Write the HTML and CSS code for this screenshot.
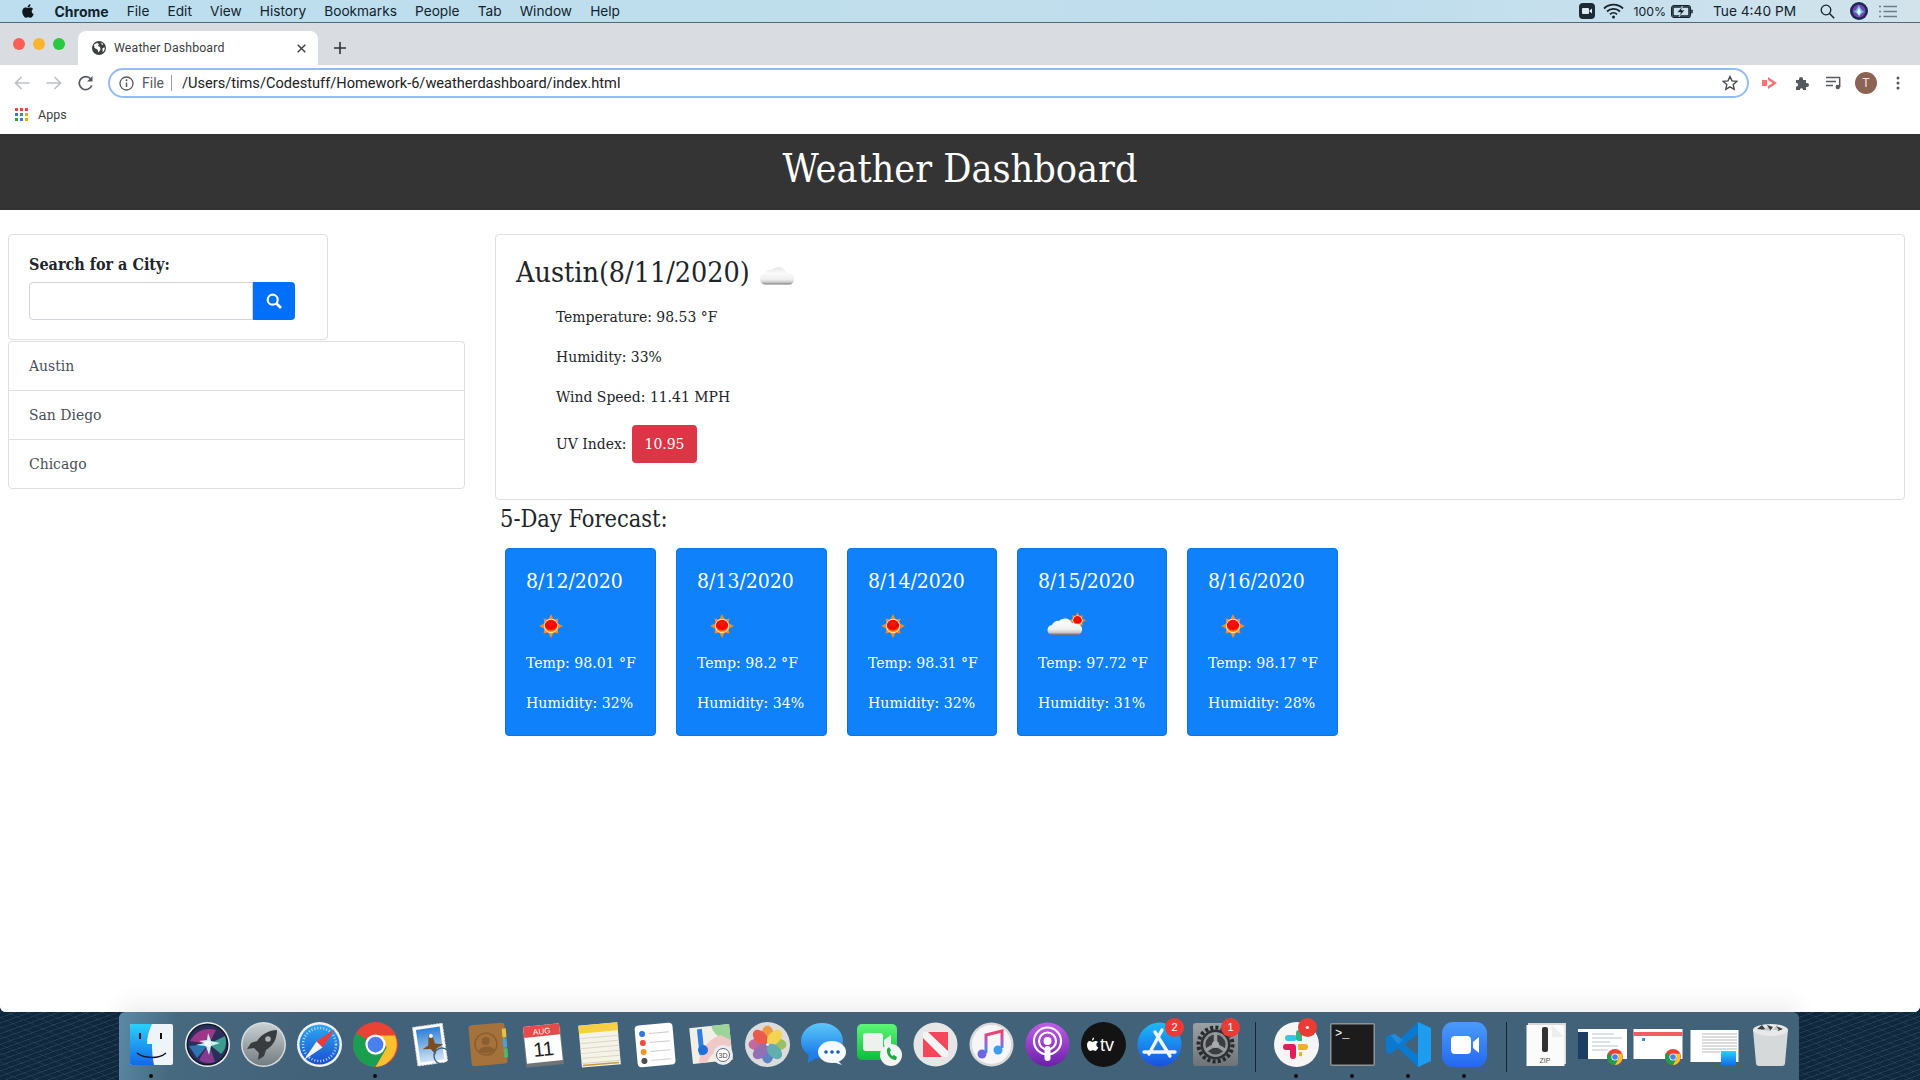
FILE: index.html
```html
<!DOCTYPE html>
<html lang="en">
<head>
<meta charset="utf-8">
<title>Weather Dashboard</title>
<link rel="stylesheet" href="styles.css">
</head>
<body>
<svg class="defs" width="0" height="0">
  <defs>
    <radialGradient id="sunG" cx="50%" cy="30%" r="70%"><stop offset="0" stop-color="#ff1a00"/><stop offset=".65" stop-color="#f50000"/><stop offset="1" stop-color="#ffc000"/></radialGradient>
    <linearGradient id="cloudG" x1="0" y1="0" x2="0" y2="1"><stop offset="0" stop-color="#fff"/><stop offset=".65" stop-color="#f0f0f0"/><stop offset=".85" stop-color="#c8c8c8"/><stop offset="1" stop-color="#666"/></linearGradient>
    <linearGradient id="cloudPale" x1="0" y1="0" x2="0" y2="1"><stop offset="0" stop-color="#e4e4e4"/><stop offset=".35" stop-color="#fafafa"/><stop offset=".7" stop-color="#f0f0f0"/><stop offset=".88" stop-color="#c6c6c6"/><stop offset="1" stop-color="#777"/></linearGradient>
    <linearGradient id="finderG" x1="0" y1="0" x2="0" y2="1"><stop offset="0" stop-color="#2bd0fb"/><stop offset="1" stop-color="#1169e8"/></linearGradient>
    <linearGradient id="rocketG" x1="0" y1="0" x2="0" y2="1"><stop offset="0" stop-color="#c9d0d3"/><stop offset="1" stop-color="#737c80"/></linearGradient>
    <linearGradient id="safariG" x1="0" y1="0" x2="0" y2="1"><stop offset="0" stop-color="#2fa8f0"/><stop offset="1" stop-color="#1a4fd0"/></linearGradient>
    <linearGradient id="skyG" x1="0" y1="0" x2="0" y2="1"><stop offset="0" stop-color="#2f7fd8"/><stop offset="1" stop-color="#cfe4f4"/></linearGradient>
    <linearGradient id="msgG" x1="0" y1="0" x2="0" y2="1"><stop offset="0" stop-color="#5cc8fa"/><stop offset="1" stop-color="#1473e6"/></linearGradient>
    <linearGradient id="ftG" x1="0" y1="0" x2="0" y2="1"><stop offset="0" stop-color="#5df777"/><stop offset="1" stop-color="#0abd3b"/></linearGradient>
    <linearGradient id="musicG" x1="0" y1="0" x2="0" y2="1"><stop offset="0" stop-color="#f5405f"/><stop offset=".5" stop-color="#a35fd8"/><stop offset="1" stop-color="#2c9cf0"/></linearGradient>
    <linearGradient id="podG" x1="0" y1="0" x2="0" y2="1"><stop offset="0" stop-color="#c45ce8"/><stop offset="1" stop-color="#6a20a8"/></linearGradient>
    <linearGradient id="appG" x1="0" y1="0" x2="0" y2="1"><stop offset="0" stop-color="#1cbcf8"/><stop offset="1" stop-color="#1a50e0"/></linearGradient>
    <linearGradient id="zoomG" x1="0" y1="0" x2="0" y2="1"><stop offset="0" stop-color="#4a9bfa"/><stop offset="1" stop-color="#2468f2"/></linearGradient>
    <linearGradient id="prefG" x1="0" y1="0" x2="0" y2="1"><stop offset="0" stop-color="#9aa0a4"/><stop offset="1" stop-color="#6e7478"/></linearGradient>
    <symbol id="sun" viewBox="0 0 24 24">
      <path d="M12 0l2.700 5.500L19.500 4.500l-1 4.800L24 12l-5.500 2.700 1 4.800-4.800-1L12 24l-2.700-5.500-4.800 1 1-4.800L0 12l5.500-2.700-1-4.800 4.800 1z" fill="#f28a2e"/>
      <circle cx="12" cy="12" r="7.200" fill="#ffe7b8"/>
      <circle cx="12" cy="12" r="6.200" fill="url(#sunG)"/>
    </symbol>
    <symbol id="chromeLogo" viewBox="0 0 40 40">
      <circle cx="20" cy="20" r="20" fill="#ea4335"/>
      <path d="M20 20L2.700 10A20 20 0 0 0 20 40l10-17.300z" fill="#1a9e50"/>
      <path d="M20 12h17.300A20 20 0 0 1 20 40l10-17.300z" fill="#fbc02d"/>
      <circle cx="20" cy="20" r="9" fill="#fff"/>
      <circle cx="20" cy="20" r="7" fill="#4a80ee"/>
    </symbol>
  </defs>
</svg>

<div class="screen">
  <header class="menubar">
    <nav class="menu-left">
      <svg class="apple" viewBox="0 0 14 16"><path d="M11.600 8.500c0-1.700 1.400-2.500 1.500-2.600-.8-1.200-2.100-1.400-2.500-1.400-1.100-.1-2.100.6-2.600.6-.6 0-1.400-.6-2.300-.6C4.500 4.500 3.400 5.200 2.800 6.200c-1.200 2.100-.3 5.200.9 6.900.6.800 1.300 1.800 2.200 1.700.9 0 1.200-.6 2.300-.6s1.400.6 2.300.6c1 0 1.600-.8 2.200-1.700.7-1 1-1.900 1-2-.1 0-1.900-.7-2-2.600zM9.800 3.400c.5-.6.800-1.400.7-2.200-.7 0-1.600.5-2.100 1.100-.5.5-.9 1.400-.8 2.100.8.100 1.600-.4 2.200-1z" fill="#10171c"/></svg>
      <b>Chrome</b><span>File</span><span>Edit</span><span>View</span><span>History</span><span>Bookmarks</span><span>People</span><span>Tab</span><span>Window</span><span>Help</span>
    </nav>
    <div class="menu-right">
      <svg class="m-zoom" viewBox="0 0 16 16"><rect width="16" height="16" rx="4" fill="#1c2a33"/><rect x="3" y="5" width="7" height="6" rx="1" fill="#dfeaf0"/><path d="M10.500 7.500L13 5.500v5L10.500 8.500z" fill="#dfeaf0"/></svg>
      <svg class="m-wifi" viewBox="0 0 21 16"><path d="M1 5.500a13.500 13.500 0 0 1 19 0M4 8.500a9.500 9.500 0 0 1 13 0M7 11.300a5 5 0 0 1 7 0" fill="none" stroke="#15222b" stroke-width="1.800"/><circle cx="10.500" cy="14" r="1.500" fill="#15222b"/></svg>
      <span class="m-pct">100%</span>
      <svg class="m-batt" viewBox="0 0 22 13"><rect x=".6" y=".6" width="18.800" height="11.800" rx="2.500" fill="none" stroke="#15222b" stroke-width="1.200"/><rect x="2" y="2" width="16" height="9" rx="1" fill="none" stroke="#15222b" stroke-width="1.500"/><path d="M11.500 1L6 7.500h3.500L8 12l6-7h-3.500z" fill="#15222b" stroke="#cfe3ee" stroke-width=".7"/><rect x="20.200" y="4.500" width="1.500" height="4" rx=".7" fill="#15222b"/></svg>
      <span class="m-time">Tue 4:40 PM</span>
      <svg class="m-search" viewBox="0 0 15 15"><circle cx="6" cy="6" r="4.800" fill="none" stroke="#15222b" stroke-width="1.300"/><path d="M9.500 9.500L14.200 14.200" stroke="#15222b" stroke-width="1.500"/></svg>
      <svg class="m-siri" viewBox="0 0 18 18"><circle cx="9" cy="9" r="9" fill="#182a50"/><circle cx="9" cy="9" r="6.500" fill="#7a3fb0"/><path d="M3 10c3-1 4-4 6-7 1 3 3 6 6 7-3 0-4 2-6 5-1-3-3-5-6-5z" fill="#5fc8e0"/><path d="M7 10l2-4 2 4-2 3z" fill="#fff"/></svg>
      <svg class="m-list" viewBox="0 0 18 13"><path d="M4.500 1.500H18M4.500 6.500H18M4.500 11.500H18" stroke="#6b7c86" stroke-width="1.500"/><path d="M0 1.500h2M0 6.500h2M0 11.500h2" stroke="#6b7c86" stroke-width="1.500"/></svg>
    </div>
  </header>

  <div class="window">
    <div class="tabstrip">
      <div class="lights"><i class="l-red"></i><i class="l-yellow"></i><i class="l-green"></i></div>
      <div class="tab">
        <svg class="globe" viewBox="0 0 14 14"><circle cx="7" cy="7" r="7" fill="#3d4043"/><path d="M2 3.500l3-1.500 2 1-1 2 2 1 .5 2.500-2 3-1-3-3-1.500zM9 1.500l2.500 1.500-1.500 1zM10.500 7l2.500-.5-1 3.500-1.500 1z" fill="#fff"/></svg>
        <span class="tab-title">Weather Dashboard</span>
        <svg class="tab-x" viewBox="0 0 9 9"><path d="M.7.700l7.600 7.600M8.300.700L.7 8.300" stroke="#3c4043" stroke-width="1.400"/></svg>
      </div>
      <svg class="tab-plus" viewBox="0 0 12 12"><path d="M6 0v12M0 6h12" stroke="#2f3235" stroke-width="1.600"/></svg>
    </div>
    <div class="toolbar">
      <svg class="t-ico t-back" viewBox="0 0 16 14"><path d="M15.500 7H1.500M7.500 1L1.500 7l6 6" fill="none" stroke="#bdc1c6" stroke-width="1.700"/></svg>
      <svg class="t-ico t-fwd" viewBox="0 0 16 14"><path d="M.5 7h14M8.500 1l6 6-6 6" fill="none" stroke="#bdc1c6" stroke-width="1.700"/></svg>
      <svg class="t-ico t-reload" viewBox="0 0 16 16"><path d="M13.800 10.500A6.500 6.500 0 1 1 12.800 4" fill="none" stroke="#55595e" stroke-width="1.700"/><path d="M14.500 1v5.500H9z" fill="#55595e"/></svg>
      <div class="omnibox">
        <svg class="o-info" viewBox="0 0 15 15"><circle cx="7.500" cy="7.500" r="6.500" fill="none" stroke="#55595e" stroke-width="1.300"/><path d="M7.500 6.500v4.500" stroke="#55595e" stroke-width="1.500"/><circle cx="7.500" cy="4.300" r="1" fill="#55595e"/></svg>
        <span class="o-file">File</span>
        <i class="o-div"></i>
        <span class="o-url">/Users/tims/Codestuff/Homework-6/weatherdashboard/index.html</span>
        <svg class="o-star" viewBox="0 0 16 16"><path d="M8 1.500l2 4.400 4.800.5-3.600 3.200 1 4.700L8 11.900l-4.200 2.400 1-4.700L1.200 6.400 6 5.900z" fill="none" stroke="#45494e" stroke-width="1.400"/></svg>
      </div>
      <svg class="t-red" viewBox="0 0 16 14"><rect x="0" y="4" width="5" height="6" fill="#fb7272"/><path d="M6 1l9 6-9 6V10l4.500-3L6 4z" fill="#fb7272"/></svg>
      <svg class="t-puzzle" viewBox="0 0 15 15"><path d="M1 4h3V3a2 2 0 0 1 4 0v1h3v3h1a2 2 0 0 1 0 4h-1v3H8v-1a2 2 0 0 0-3 0v1H1v-3.500h1a2 2 0 0 0 0-3.500H1z" fill="#55595e"/></svg>
      <svg class="t-queue" viewBox="0 0 16 14"><path d="M0 1.500h14M0 5.500h10M0 9.500h7" stroke="#55595e" stroke-width="1.500"/><path d="M13.700 1.500v9.500" stroke="#55595e" stroke-width="1.500"/><circle cx="11.800" cy="11" r="2.200" fill="#55595e"/></svg>
      <div class="avatar">T</div>
      <svg class="t-dots" viewBox="0 0 4 14"><circle cx="2" cy="2" r="1.500" fill="#55595e"/><circle cx="2" cy="7" r="1.500" fill="#55595e"/><circle cx="2" cy="12" r="1.500" fill="#55595e"/></svg>
    </div>
    <div class="bookmarks">
      <div class="apps-grid"><i class="g-r"></i><i class="g-r"></i><i class="g-r"></i><i class="g-b"></i><i class="g-g"></i><i class="g-y"></i><i class="g-g"></i><i class="g-b"></i><i class="g-y"></i></div>
      <span class="apps-label">Apps</span>
    </div>

    <main class="page">
      <header class="hero"><h1>Weather Dashboard</h1></header>
      <div class="content">
        <aside class="sidebar">
          <section class="search-card">
            <label class="search-label">Search for a City:</label>
            <div class="search-row">
              <input class="search-input" type="text">
              <button class="search-btn" type="button"><svg viewBox="0 0 16 16"><circle cx="6.700" cy="6.700" r="5" fill="none" stroke="#fff" stroke-width="2.200"/><path d="M10.500 10.500L15 15" stroke="#fff" stroke-width="2.600"/></svg></button>
            </div>
          </section>
          <ul class="cities">
            <li>Austin</li>
            <li>San Diego</li>
            <li>Chicago</li>
          </ul>
        </aside>
        <section class="main">
          <div class="current">
            <h2>Austin(8/11/2020) <svg class="cloud-ico" viewBox="0 0 36 20"><path d="M6 19.500a5.500 5.500 0 0 1-1-11A6 6 0 0 1 12 5a8.500 8.500 0 0 1 14 2 6 6 0 0 1 3.500 1A6 6 0 0 1 30 19.500z" fill="url(#cloudPale)"/></svg></h2>
            <p>Temperature: 98.53 °F</p>
            <p>Humidity: 33%</p>
            <p>Wind Speed: 11.41 MPH</p>
            <p class="uv">UV Index: <span class="uv-badge">10.95</span></p>
          </div>
          <h3>5-Day Forecast:</h3>
          <div class="forecast">
            <article class="day">
              <h4>8/12/2020</h4>
              <div class="day-ico"><svg class="sun"><use href="#sun"/></svg></div>
              <p>Temp: 98.01 °F</p>
              <p>Humidity: 32%</p>
            </article>
            <article class="day">
              <h4>8/13/2020</h4>
              <div class="day-ico"><svg class="sun"><use href="#sun"/></svg></div>
              <p>Temp: 98.2 °F</p>
              <p>Humidity: 34%</p>
            </article>
            <article class="day day-narrow">
              <h4>8/14/2020</h4>
              <div class="day-ico"><svg class="sun"><use href="#sun"/></svg></div>
              <p>Temp: 98.31 °F</p>
              <p>Humidity: 32%</p>
            </article>
            <article class="day day-narrow">
              <h4>8/15/2020</h4>
              <div class="day-ico"><svg class="partly" viewBox="0 0 40 24"><use href="#sun" x="22" y="0" width="17" height="17"/><path d="M6 23a5 5 0 0 1-1-10A6 6 0 0 1 12 9a8 8 0 0 1 13 2 6 6 0 0 1 3 1 5.500 5.500 0 0 1 3 11z" fill="url(#cloudG)"/></svg></div>
              <p>Temp: 97.72 °F</p>
              <p>Humidity: 31%</p>
            </article>
            <article class="day">
              <h4>8/16/2020</h4>
              <div class="day-ico"><svg class="sun"><use href="#sun"/></svg></div>
              <p>Temp: 98.17 °F</p>
              <p>Humidity: 28%</p>
            </article>
          </div>
        </section>
      </div>
    </main>
  </div>

  <footer class="desk">
    <div class="dock">
      <div class="slot on"><svg viewBox="0 0 45 45"><rect x="1" y="2" width="43" height="41" rx="2" fill="#eef4f8"/><path d="M3 2h20c-3 6-5 13-5 20h5c0 7 .5 14 2 21H3a2 2 0 0 1-2-2V4a2 2 0 0 1 2-2z" fill="url(#finderG)"/><path d="M11 11v6M32 11v6" stroke="#111" stroke-width="2"/><path d="M8 31c8 6 22 6 29 0" fill="none" stroke="#111" stroke-width="1.500"/></svg></div>
      <div class="slot"><svg viewBox="0 0 45 45"><circle cx="22.500" cy="22.500" r="22.500" fill="#f0f0f0"/><circle cx="22.500" cy="22.500" r="21" fill="#111a2c"/><circle cx="22.500" cy="22.500" r="19.500" fill="#2a2f5a"/><path d="M5 19c6-10 14-14 26-11l-7 14z" fill="#b03a90" opacity=".85"/><path d="M24 22L40 14c2 6 1 14-4 18z" fill="#3fae98" opacity=".85"/><path d="M24 22L30 40c-6 2-12 1-16-2z" fill="#9a3f9f" opacity=".8"/><path d="M4 24l20-2-12 14z" fill="#2f86c8" opacity=".8"/><path d="M14 19l8-1 1-7 3 8 9 2-9 3-2 9-3-9-10-1 8-2z" fill="#c9f4ee"/><circle cx="23" cy="22" r="3" fill="#fff"/></svg></div>
      <div class="slot"><svg viewBox="0 0 45 45"><circle cx="22.500" cy="22.500" r="22.500" fill="#d8dcde"/><circle cx="22.500" cy="22.500" r="21" fill="url(#rocketG)"/><path d="M36 8c-8 0-15 4-20 11l-6 2-4 6 7-1 5 5-1 7 6-4 2-6c7-4 11-11 11-20z" fill="#383c3f"/><circle cx="27" cy="17" r="2.800" fill="#aab2b6"/></svg></div>
      <div class="slot"><svg viewBox="0 0 45 45"><circle cx="22.500" cy="22.500" r="22.500" fill="#eef2f5"/><circle cx="22.500" cy="22.500" r="20" fill="url(#safariG)"/><circle cx="22.500" cy="22.500" r="16.500" fill="none" stroke="#bcd9f4" stroke-width="2.500" stroke-dasharray="1 2"/><path d="M38 7L19.500 19.500l6 6z" fill="#f03a3a"/><path d="M7 38l12.500-18.500 6 6z" fill="#f3f3f3"/></svg></div>
      <div class="slot on"><svg viewBox="0 0 45 45"><use href="#chromeLogo" x="0" y="0" width="45" height="45"/></svg></div>
      <div class="slot"><svg viewBox="0 0 45 45"><g transform="rotate(-8 22 22)"><rect x="6" y="3" width="30" height="39" fill="#fff" stroke="#ddd" stroke-dasharray="2 1"/><rect x="9" y="6" width="24" height="33" fill="url(#skyG)"/><path d="M21 12l4 4 1 6 8 2-7 3-2 6-4-6-8-1 6-3z" fill="#7a4d22"/><circle cx="23" cy="14" r="2" fill="#eee"/></g><circle cx="33" cy="34" r="8" fill="none" stroke="#3f6682" stroke-width="1.500"/></svg></div>
      <div class="slot"><svg viewBox="0 0 45 45"><g transform="rotate(-5 22 22)"><rect x="5" y="2" width="36" height="41" rx="3" fill="#a5723c"/><rect x="38" y="8" width="4" height="9" fill="#e6c144"/><rect x="38" y="18" width="4" height="9" fill="#4aa0d8"/><rect x="38" y="28" width="4" height="9" fill="#55b565"/><circle cx="21" cy="22" r="11" fill="none" stroke="#8a5e30" stroke-width="1.500"/><circle cx="21" cy="19" r="4" fill="#8a5e30"/><path d="M13 29c2-6 14-6 16 0-4 3-12 3-16 0z" fill="#8a5e30"/></g></svg></div>
      <div class="slot"><svg viewBox="0 0 45 45"><g transform="rotate(-6 22 22)"><rect x="3" y="7" width="38" height="37" fill="#6e7479"/><rect x="4" y="3" width="36" height="37" fill="#fff"/><path d="M4 3h36v11H4z" fill="#e84a4a"/><text x="22" y="12" class="ic-aug">AUG</text><text x="22" y="34" class="ic-day">11</text></g></svg></div>
      <div class="slot"><svg viewBox="0 0 45 45"><g transform="rotate(-5 22 22)"><rect x="3" y="2" width="39" height="42" fill="#f5f3e8"/><path d="M3 2h39v8H3z" fill="#f7cf45"/><path d="M3 15h39M3 20h39M3 25h39M3 30h39M3 35h39M3 40h39" stroke="#d9d6c6"/></g><path d="M6 43.500l36-3" stroke="#c89a2a" stroke-width="1.500"/></svg></div>
      <div class="slot"><svg viewBox="0 0 45 45"><g transform="rotate(-5 22 22)"><rect x="3" y="2" width="38" height="42" rx="4" fill="#fff"/><circle cx="10" cy="11" r="3" fill="#2a7ae8"/><circle cx="10" cy="20" r="3" fill="#ef4a3f"/><circle cx="10" cy="29" r="3" fill="#f2952b"/><circle cx="10" cy="38" r="3" fill="#4d4d4d"/><path d="M17 11h20M17 20h20M17 29h20M17 38h20" stroke="#ccc"/></g></svg></div>
      <div class="slot"><svg viewBox="0 0 45 45"><g transform="rotate(-6 22 22)"><rect x="2" y="4" width="40" height="36" fill="#f2f0e6"/><path d="M24 4h18v16c-8 0-16-6-18-16z" fill="#9dd49a"/><path d="M8 40c2-12 10-22 24-26l10 6v6c-14 2-22 6-26 14z" fill="#f0c8c8"/><path d="M12 6v26" stroke="#2f7de0" stroke-width="5"/></g><circle cx="14" cy="28" r="5" fill="#1f6fd8"/><circle cx="34" cy="33" r="10" fill="#e9edf0"/><circle cx="34" cy="33" r="6.500" fill="#fff" stroke="#667"/><text x="34" y="36" class="ic-3d">3D</text></svg></div>
      <div class="slot"><svg viewBox="0 0 45 45"><circle cx="22.500" cy="22.500" r="22.500" fill="#dcdcdc"/><g opacity=".88"><ellipse cx="22.500" cy="12.500" rx="6" ry="9" fill="#f2902f"/><ellipse cx="22.500" cy="32.500" rx="6" ry="9" fill="#4a78c0"/><ellipse cx="12.500" cy="22.500" rx="9" ry="6" fill="#c05a98"/><ellipse cx="32.500" cy="22.500" rx="9" ry="6" fill="#8fbf4a"/><ellipse cx="15.500" cy="15.500" rx="6" ry="9" transform="rotate(-45 15.500 15.500)" fill="#ea4a3a"/><ellipse cx="29.500" cy="15.500" rx="6" ry="9" transform="rotate(45 29.500 15.500)" fill="#f6d23f"/><ellipse cx="15.500" cy="29.500" rx="6" ry="9" transform="rotate(45 15.500 29.500)" fill="#8a62b0"/><ellipse cx="29.500" cy="29.500" rx="6" ry="9" transform="rotate(-45 29.500 29.500)" fill="#52a8a8"/></g><circle cx="22.500" cy="22.500" r="1.200" fill="#fff"/></svg></div>
      <div class="slot"><svg viewBox="0 0 45 45"><ellipse cx="21" cy="19" rx="21" ry="18" fill="url(#msgG)"/><path d="M8 30l-1 11 11-7z" fill="#2080ea"/><ellipse cx="31" cy="30" rx="14" ry="11" fill="#f6fafd"/><path d="M36 38l5 5-9-3z" fill="#f6fafd"/><circle cx="25" cy="30" r="1.800" fill="#1a5fb0"/><circle cx="31" cy="30" r="1.800" fill="#1a5fb0"/><circle cx="37" cy="30" r="1.800" fill="#1a5fb0"/></svg></div>
      <div class="slot"><svg viewBox="0 0 45 45"><rect x="0" y="2" width="40" height="36" rx="5" fill="url(#ftG)"/><rect x="6" y="11" width="20" height="18" rx="3" fill="#eef2ee"/><path d="M27 18l7-5v15l-7-5z" fill="#eef2ee"/><circle cx="34" cy="33" r="11" fill="#f2f5f2"/><path d="M30 27c-1 5 3 11 9 11l1-3-3-2-2 1c-1-1-2-3-2-4l1-2-2-3z" fill="#22a94a"/></svg></div>
      <div class="slot"><svg viewBox="0 0 45 45"><circle cx="22.500" cy="22.500" r="22" fill="#e6e6e6"/><path d="M10 10h25v25H10z" fill="#f3485b"/><path d="M10 10h5l20 19v6h-6L10 16z" fill="#f4f4f4"/><path d="M10 20l12 15H10zM21 10h14v14z" fill="#f3485b"/></svg></div>
      <div class="slot"><svg viewBox="0 0 45 45"><circle cx="22.500" cy="22.500" r="22" fill="#d9d9d9"/><circle cx="22.500" cy="22.500" r="19.500" fill="#f6f6f8"/><path d="M17 31V13l16-4v17" fill="none" stroke="url(#musicG)" stroke-width="3"/><circle cx="13" cy="32" r="4.500" fill="#6f66e0"/><circle cx="29" cy="28" r="4.500" fill="#3f9cf0"/></svg></div>
      <div class="slot"><svg viewBox="0 0 45 45"><circle cx="22.500" cy="22.500" r="22" fill="url(#podG)"/><circle cx="22.500" cy="19" r="13.500" fill="none" stroke="#fff" stroke-width="2.200"/><circle cx="22.500" cy="19" r="8.500" fill="none" stroke="#fff" stroke-width="2.200"/><circle cx="22.500" cy="19" r="4" fill="#fff"/><rect x="19.500" y="24" width="6" height="15" rx="3" fill="#fff"/></svg></div>
      <div class="slot"><svg viewBox="0 0 45 45"><circle cx="22.500" cy="22.500" r="22.500" fill="#131313"/><path d="M14.500 19c-1.500 0-2.300 1-3 1s-1.500-1-2.700-1C7 19 6 21 6 23c0 3 2 6 3.500 6 1 0 1.300-.7 2.400-.7 1.100 0 1.400.7 2.400.7 1.200 0 2.700-2.600 3-3.500-2.800-1.500-2.200-4.500-.2-5.500-.6-.7-1.500-1-2.600-1zM13 15.500c-1 .2-2.200 1.400-2 3 1.200 0 2.300-1.300 2-3z" fill="#fff"/><text x="19" y="29" class="ic-tv">tv</text></svg></div>
      <div class="slot"><svg viewBox="0 0 45 45"><circle cx="22.500" cy="22.500" r="22" fill="url(#appG)"/><path d="M25 8L12 32M18 10l15 24M7 30h31" stroke="#f1f5fb" stroke-width="3.400" stroke-linecap="round"/></svg><b class="badge">2</b></div>
      <div class="slot"><svg viewBox="0 0 45 45"><rect x="0" y="1" width="45" height="43" rx="3" fill="url(#prefG)"/><circle cx="22.500" cy="22.500" r="17" fill="none" stroke="#26282a" stroke-width="4" stroke-dasharray="3 2.300"/><circle cx="22.500" cy="22.500" r="15" fill="#2d2f31"/><circle cx="22.500" cy="22.500" r="12.500" fill="#8e9194"/><circle cx="22.500" cy="22.500" r="10" fill="#3a3c3e"/><path d="M22.500 22.500L22.500 11M22.500 22.500L12.500 28.500M22.500 22.500L32.500 28.500" stroke="#9a9da0" stroke-width="3.500"/><circle cx="22.500" cy="22.500" r="3.500" fill="#aaa"/></svg><b class="badge">1</b></div>
      <i class="sep sep-a"></i>
      <div class="slot on"><svg viewBox="0 0 45 45"><ellipse cx="22.500" cy="22.500" rx="22.500" ry="22.500" fill="#f6f6f6"/><path d="M14 19h6a3 3 0 0 0 0-6h-6a3 3 0 0 0 0 6z" fill="#36c5f0"/><path d="M22 11a3 3 0 0 1 6 0v8h-3a3 3 0 0 1-3-3z" fill="#2eb67d"/><path d="M24 22h7a3 3 0 0 1 0 6h-7z" fill="#ecb22e"/><path d="M12 22h7a3 3 0 0 1 3 3v9a3 3 0 0 1-6 0v-6h-4a3 3 0 0 1 0-6z" fill="#e01e5a"/><path d="M25 30h3v4a3 3 0 0 1-3 0z" fill="#ecb22e"/></svg><b class="badge badge-dot">•</b></div>
      <div class="slot on"><svg viewBox="0 0 45 45"><rect x="0" y="1" width="45" height="43" rx="2" fill="#8e9496"/><rect x="1.500" y="2.500" width="42" height="40" fill="#1c1c1c"/><text x="5" y="15" class="ic-term">&gt;_</text></svg></div>
      <div class="slot on"><svg viewBox="0 0 45 45"><path d="M32 0l13 6v33l-13 6L12 26l-8 6-4-2V15l4-2 8 6z" fill="#0a7ad0"/><path d="M32 0l13 6v33l-13 6z" fill="#1e9cf0"/><path d="M32 12L18 22.500 32 33z" fill="#42627a"/><path d="M4 13l5-1 8 6-5 4z" fill="#1f8ae0"/></svg></div>
      <div class="slot on"><svg viewBox="0 0 45 45"><rect x="0" y="0" width="45" height="45" rx="11" fill="url(#zoomG)"/><rect x="9" y="14" width="20" height="18" rx="4" fill="#fff"/><path d="M31 20l6-5v16l-6-5z" fill="#fff"/></svg></div>
      <i class="sep sep-b"></i>
      <div class="slot"><svg viewBox="0 0 45 45"><rect x="4" y="1" width="38" height="41" fill="#d8d8d8"/><rect x="2.500" y="3" width="38" height="41" fill="#fbfbfb"/><rect x="18" y="5" width="6" height="25" rx="2" fill="#333"/><path d="M28 3l12 12h-12z" fill="#eee"/><text x="21" y="41" class="ic-zip">ZIP</text></svg></div>
      <div class="slot"><svg viewBox="0 0 45 45"><rect x="-2" y="7" width="49" height="30" fill="#fff"/><rect x="-2" y="10" width="10" height="27" fill="#1c3c62"/><path d="M12 12h22M12 16h30M12 20h18M12 24h26M12 28h16" stroke="#b8c4cc"/><use href="#chromeLogo" x="27" y="27" width="16" height="16"/></svg></div>
      <div class="slot"><svg viewBox="0 0 45 45"><rect x="-2.500" y="7" width="49" height="30" fill="#fff"/><rect x="-2.500" y="10" width="49" height="4" fill="#ef5f5f"/><rect x="6" y="16" width="3" height="3" fill="#3a8ce8"/><use href="#chromeLogo" x="29" y="27" width="16" height="16"/></svg></div>
      <div class="slot"><svg viewBox="0 0 45 45"><rect x="-1.500" y="8" width="48" height="32" fill="#fff"/><path d="M10 12h35M10 15h35M10 18h35M10 21h35M10 24h35M10 27h35M10 30h18" stroke="#b9b9b9"/><rect x="29" y="29" width="15" height="15" fill="url(#finderG)"/></svg></div>
      <div class="slot"><svg viewBox="0 0 45 45"><path d="M5 8h35l-3 33a3 3 0 0 1-3 3H11a3 3 0 0 1-3-3z" fill="#d6d9d9"/><ellipse cx="22.500" cy="8" rx="17.500" ry="6" fill="#e8e8e8"/><path d="M9 7l5-4 4 5zM19 3l6 2-3 4zM28 4l7 3-5 2z" fill="#3a3f44"/><path d="M15 8l5-3 3 4zM25 8l3-4 3 4z" fill="#c2c6ca"/></svg></div>
    </div>
  </footer>
</div>
</body>
</html>
```

FILE: styles.css
```css
* { box-sizing: border-box; }
html, body { margin: 0; height: 100%; }
body { font-family: "Liberation Sans", sans-serif; overflow: hidden; color: #212529; }
.defs { position: absolute; }
.screen {
  width: 1920px; height: 1080px; display: flex; flex-direction: column;
  background: #10283e;
}

/* mac menu bar */
.menubar {
  height: 23px; flex: none; display: flex; justify-content: space-between; align-items: center;
  background: linear-gradient(90deg, #bcdeee, #c0deec 50%, #bedded 70%, #d2e3ec);
  border-bottom: 1px solid #52697a; color: #10222e;
  font-family: "Inter", sans-serif; font-size: 13.700px;
}
.menu-left { display: flex; align-items: center; gap: 18.100px; padding-left: 20px; }
.menu-left b { font-weight: 700; margin-left: 2.400px; font-size: 14px; }
.apple { width: 14px; height: 16px; }
.menu-right { display: flex; align-items: center; }
.m-zoom { width: 16px; height: 16px; }
.m-wifi { width: 21px; height: 16px; margin-left: 8px; }
.m-pct { margin-left: 9px; font-size: 12.300px; }
.m-batt { width: 22px; height: 13px; margin-left: 5px; }
.m-time { margin-left: 20px; }
.m-search { width: 15px; height: 15px; margin-left: 24px; }
.m-siri { width: 18px; height: 18px; margin-left: 15px; }
.m-list { width: 18px; height: 13px; margin: 0 23px 0 11px; }

/* browser */
.window { flex: 1; display: flex; flex-direction: column; background: #fff; border-radius: 0 0 6px 6px; overflow: hidden; min-height: 0; }
.tabstrip { height: 42px; flex: none; display: flex; align-items: flex-end; background: #d9dce1; }
.lights { display: flex; gap: 8px; padding: 0 12px 0 13px; align-self: flex-start; margin-top: 15px; width: 78px; }
.lights i { width: 12px; height: 12px; border-radius: 50%; }
.l-red { background: #fb5d57; }
.l-yellow { background: #fcb42e; }
.l-green { background: #28c840; }
.tab { width: 240px; height: 34px; background: #fff; border-radius: 8px 8px 0 0; display: flex; align-items: center; padding: 0 12px 0 14px; }
.globe { width: 14px; height: 14px; flex: none; }
.tab-title { font-size: 12.300px; color: #3c4043; margin-left: 8px; flex: 1; font-family: "Roboto", sans-serif; letter-spacing: .15px; }
.tab-x { width: 9px; height: 9px; }
.tab-plus { width: 12px; height: 12px; margin: 0 0 11px 16px; }

.toolbar { height: 36px; flex: none; display: flex; align-items: center; padding-left: 14px; background: #fff; }
.t-ico { flex: none; }
.t-back, .t-fwd { width: 16px; height: 14px; }
.t-fwd { margin-left: 16px; }
.t-reload { width: 16px; height: 16px; margin-left: 16px; }
.omnibox {
  width: 1641px; height: 30px; margin-left: 14px; border: 2px solid #93bbf6; border-radius: 15px;
  display: flex; align-items: center; padding: 0 9px 0 9px; font-family: "Roboto", sans-serif; font-size: 14px;
}
.o-info { width: 15px; height: 15px; flex: none; }
.o-file { color: #55595e; margin-left: 8px; font-size: 14px; }
.o-div { width: 1px; height: 16px; background: #9aa0a6; margin-left: 7px; }
.o-url { margin-left: 10px; flex: 1; color: #202124; font-size: 14.600px; }
.o-star { width: 16px; height: 16px; flex: none; }
.t-red { width: 16px; height: 14px; margin-left: 13px; }
.t-puzzle { width: 15px; height: 15px; margin-left: 17px; }
.t-queue { width: 16px; height: 14px; margin-left: 16px; }
.avatar { width: 22px; height: 22px; border-radius: 50%; background: #8c6355; color: #f0e6e2; font-size: 12px; display: flex; align-items: center; justify-content: center; margin-left: 13px; }
.t-dots { width: 4px; height: 14px; margin-left: 19px; }

.bookmarks { height: 33px; flex: none; display: flex; align-items: center; padding: 0 0 7px 15px; background: #fff; }
.apps-grid { width: 13px; height: 13px; display: grid; grid-template-columns: repeat(3, 3px); grid-auto-rows: 3px; gap: 2px; }
.g-r { background: #e8453c; }
.g-b { background: #3b78e7; }
.g-g { background: #2e9e52; }
.g-y { background: #f7a600; }
.apps-label { font-size: 12.500px; color: #3c4043; margin-left: 10px; font-family: "Roboto", sans-serif; }

/* page */
.page { flex: 1; min-height: 0; font-family: "DejaVu Serif Condensed", "DejaVu Serif", serif; font-stretch: condensed; background: #fff; }
.hero { height: 76px; padding-bottom: 7px; background: #343434; display: flex; justify-content: center; align-items: center; }
.hero h1 { margin: 0; color: #fff; font-weight: 400; font-size: 39.200px; line-height: 1; }
.content { display: flex; padding: 24px 15px 0 8px; }
.sidebar { width: 457px; flex: none; }
.search-card { width: 320px; height: 106px; border: 1px solid #dfdfdf; border-radius: 4px; padding: 20px; }
.search-label { display: block; font-weight: 700; font-size: 16px; line-height: 19px; color: #212529; }
.search-row { display: flex; margin-top: 8px; }
.search-input { width: 224px; height: 38px; border: 1px solid #ced4da; border-radius: 4px 0 0 4px; padding: 0; outline: 0; }
.search-btn { width: 42px; height: 38px; border: 0; background: #006ffa; border-radius: 0 4px 4px 0; padding: 0; display: flex; align-items: center; justify-content: center; }
.search-btn svg { width: 16px; height: 16px; }
.cities { list-style: none; margin: 1px 0 0; padding: 0; border: 1px solid #dfdfdf; border-radius: 4px; }
.cities li { height: 49px; line-height: 48px; padding-left: 20px; font-size: 15.500px; color: #495057; border-bottom: 1px solid #dfdfdf; }
.cities li:last-child { border-bottom: 0; height: 48px; }

.main { flex: 1; margin-left: 30px; }
.current { height: 266px; border: 1px solid #dfdfdf; border-radius: 4px; padding: 19px 20px 0; }
.current h2 { margin: 0; font-weight: 400; font-size: 28.400px; line-height: 37px; color: #212529; }
.cloud-ico { width: 36px; height: 20px; vertical-align: -3px; margin-left: 2px; }
.current p { margin: 0 0 16px 40px; font-size: 15.500px; line-height: 24px; }
.current h2 + p { margin-top: 14px; }
.uv { display: flex; align-items: center; gap: 5.500px; height: 38px; }
.uv-badge { width: 65px; height: 38px; background: #dc3545; color: #fff; border-radius: 4px; display: flex; align-items: center; justify-content: center; }
.main h3 { margin: 5px 0 0 5px; font-weight: 400; font-size: 23.400px; line-height: 29px; height: 43px; }
.forecast { display: flex; gap: 20px; padding-left: 10px; }
.day { width: 151px; height: 188px; background: #0f81fb; border: 1px solid #0d74e0; border-radius: 4px; padding: 19px 20px; color: #fff; }
.day-narrow { width: 150px; }
.day h4 { margin: 0; font-weight: 400; font-size: 21px; line-height: 26px; }
.day-ico { height: 36px; margin: 14px 0 7px; padding-left: 13px; display: flex; align-items: center; }
.sun { width: 24px; height: 24px; }
.partly { width: 40px; height: 24px; margin: -4px 0 0 -4px; }
.day p { margin: 0 0 16px; font-size: 15.700px; line-height: 24px; white-space: nowrap; }

/* dock */
.desk {
  height: 68px; flex: none; position: relative; display: flex; padding-left: 119px;
  background:
    repeating-linear-gradient(160deg, rgba(120,160,190,.16) 0 1px, transparent 1px 5px),
    repeating-linear-gradient(25deg, rgba(100,140,170,.10) 0 1px, transparent 1px 8px),
    #10283e;
}
.dock {
  width: 1680px; height: 68px; border-radius: 6px 6px 0 0; display: flex; align-items: flex-start;
  background: linear-gradient(100deg, #5b8aa8 0, #47697f 60px, #42627a 200px);
  padding: 10px 0 0 4px; box-shadow: 0 -8px 22px rgba(0,0,0,.07);
}
.slot { width: 56px; height: 58px; flex: none; position: relative; display: flex; justify-content: center; }
.slot svg { width: 45px; height: 45px; overflow: visible; }
.slot.on::after { content: ""; position: absolute; left: 26px; top: 52px; width: 4px; height: 4px; border-radius: 50%; background: #0a0f14; }
.sep { width: 1px; height: 50px; background: #17242f; flex: none; }
.sep-a { margin: 0 12px 0 12px; }
.sep-b { margin: 0 11px 0 14px; }
.badge { position: absolute; left: 34px; top: -4px; width: 19px; height: 19px; border-radius: 50%; background: #ec3a35; color: #fff; font: 400 11px/19px "Liberation Sans", sans-serif; text-align: center; }
.badge-dot { left: 30px; }
.ic-aug { font: 8px "Liberation Sans", sans-serif; fill: #fff; text-anchor: middle; }
.ic-day { font: 20px "Liberation Sans", sans-serif; fill: #222; text-anchor: middle; }
.ic-3d { font: 7px "Liberation Sans", sans-serif; fill: #444; text-anchor: middle; }
.ic-tv { font: 400 18px "Liberation Sans", sans-serif; fill: #fff; }
.ic-term { font: 12px "Liberation Mono", monospace; fill: #fff; }
.ic-zip { font: 7px "Liberation Sans", sans-serif; fill: #555; text-anchor: middle; }
```
